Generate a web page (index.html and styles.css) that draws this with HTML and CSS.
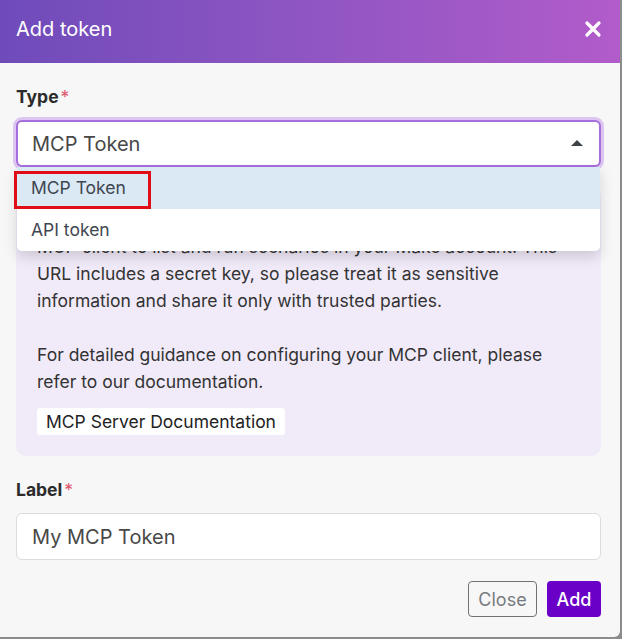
FILE: index.html
```html
<!DOCTYPE html>
<html>
<head>
<meta charset="utf-8">
<link rel="stylesheet" href="styles.css">
</head>
<body>
<div class="dialog">
  <div class="header">
    <div class="title">Add token</div>
    <svg class="close-x" width="18" height="18" viewBox="0 0 18 18"><path d="M3 3 L15 15 M15 3 L3 15" stroke="#fff" stroke-width="3.2" stroke-linecap="round"/></svg>
  </div>
  <div class="body">
    <div class="label">Type<span class="req">*</span></div>
    <div class="select-wrap">
      <div class="select">
        <span class="select-value">MCP Token</span>
        <svg class="caret" width="12" height="8" viewBox="0 0 12 8"><path d="M0 7 L6 1 L12 7 Z" fill="#3d4247"/></svg>
      </div>
      <div class="menu">
        <div class="option active">MCP Token</div>
        <div class="option">API token</div>
      </div>
      <div class="highlight"></div>
    </div>
    <div class="info">
      <p class="info-text">Use this token to get your MCP server URL, which allows your<br>MCP client to list and run scenarios in your Make account. This<br>URL includes a secret key, so please treat it as sensitive<br>information and share it only with trusted parties.</p>
      <p class="info-text">For detailed guidance on configuring your MCP client, please<br>refer to our documentation.</p>
      <span class="doc-btn">MCP Server Documentation</span>
    </div>
    <div class="label label2">Label<span class="req">*</span></div>
    <div class="input">My MCP Token</div>
    <div class="actions">
      <span class="btn btn-close">Close</span>
      <span class="btn btn-add">Add</span>
    </div>
  </div>
</div>
</body>
</html>
```

FILE: styles.css
```css
* { box-sizing: border-box; }
html, body { margin: 0; padding: 0; }
body {
  background: #8c8c8c;
  width: 622px;
  height: 639px;
  overflow: hidden;
  font-family: Inter, "Noto Sans", sans-serif;
}
.dialog {
  width: 620px;
  height: 637px;
  background: #f7f7f7;
  border-radius: 0 0 6px 0;
  overflow: hidden;
}
.header {
  height: 63px;
  background: linear-gradient(90deg, #6f4bba 0%, #8c55c2 45%, #b15cca 100%);
  display: flex;
  align-items: center;
  justify-content: space-between;
  padding: 0 18px 0 16px;
}
.title {
  color: #fff;
  font-size: 20px;
  font-weight: 400;
  margin-top: -6px;
}
.close-x { margin-top: -6px; }
.body {
  padding: 22px 19px 20px 16px;
}
.label {
  font-size: 17.5px;
  font-weight: 700;
  color: #2b2b2b;
  line-height: 24px;
  height: 24px;
}
.req { color: #e0566e; font-weight: 400; margin-left: 2px; }
.select-wrap {
  position: relative;
  margin-top: 11px;
}
.select {
  height: 47px;
  background: #fff;
  border: 2px solid #a66fdc;
  border-radius: 6px;
  box-shadow: 0 0 0 3px #dcc6f1;
  display: flex;
  align-items: center;
  justify-content: space-between;
  padding: 0 16px 0 14px;
}
.select-value { font-size: 20px; color: #484848; }
.caret { margin-top: -2px; }
.menu {
  position: absolute;
  left: 1px;
  right: 1px;
  top: 47px;
  background: #fff;
  border-radius: 0 0 5px 5px;
  box-shadow: 0 6px 14px rgba(0,0,0,0.15);
  overflow: hidden;
  z-index: 2;
}
.option {
  height: 42px;
  line-height: 42px;
  padding-left: 14px;
  font-size: 17.5px;
  color: #3f4650;
}
.option.active { background: #dbe9f5; }
.highlight {
  position: absolute;
  left: -2px;
  top: 51px;
  width: 137px;
  height: 38px;
  border: 3px solid #e00d17;
  z-index: 3;
}
.info {
  margin-top: 19px;
  background: #f1eaf9;
  border-radius: 10px;
  padding: 20px 20px 21px 21px;
}
.info-text {
  margin: 0 0 27px 0;
  font-size: 17.5px;
  line-height: 27px;
  color: #333;
  white-space: nowrap;
}
.info-text + .info-text { margin-bottom: 13px; }
.doc-btn {
  display: inline-block;
  background: #fff;
  border-radius: 3px;
  font-size: 17.5px;
  line-height: 27px;
  height: 27px;
  padding: 0 9px;
  color: #222;
}
.label2 { margin-top: 22px; }
.input {
  margin-top: 11px;
  height: 47px;
  background: #fff;
  border: 1px solid #dcdcdc;
  border-radius: 6px;
  display: flex;
  align-items: center;
  padding-left: 15px;
  font-size: 20px;
  color: #484848;
}
.actions {
  margin-top: 21px;
  display: flex;
  justify-content: flex-end;
  gap: 10px;
}
.btn {
  height: 36px;
  display: inline-flex;
  align-items: center;
  justify-content: center;
  border-radius: 4px;
  font-size: 18px;
}
.btn-close {
  width: 69px;
  border: 1px solid #6f7378;
  color: #777b80;
  background: #f7f7f7;
}
.btn-add {
  width: 54px;
  background: #6a00c8;
  color: #fff;
  font-weight: 500;
}
```
